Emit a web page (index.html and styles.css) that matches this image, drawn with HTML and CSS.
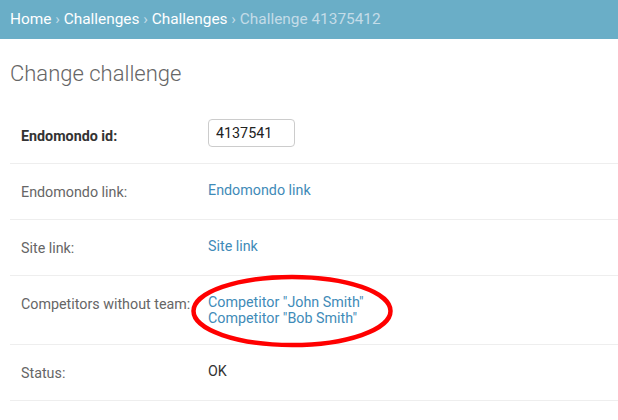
FILE: index.html
```html
<!DOCTYPE html>
<html>
<head>
<meta charset="utf-8">
<link rel="stylesheet" href="styles.css">
</head>
<body>
<div class="breadcrumbs">
  <a href="#">Home</a> <span class="sep">›</span> <a href="#">Challenges</a> <span class="sep">›</span> <a href="#">Challenges</a> <span class="sep">›</span> <span class="current">Challenge 41375412</span>
</div>
<div class="content">
  <h1 class="title">Change challenge</h1>
  <div class="fieldset">
    <div class="form-row">
      <label class="label required">Endomondo id:</label>
      <div class="field"><input class="text-input" type="text" value="4137541"></div>
    </div>
    <div class="form-row">
      <label class="label">Endomondo link:</label>
      <div class="readonly"><a href="#">Endomondo link</a></div>
    </div>
    <div class="form-row">
      <label class="label">Site link:</label>
      <div class="readonly"><a href="#">Site link</a></div>
    </div>
    <div class="form-row">
      <label class="label">Competitors without team:</label>
      <div class="readonly"><a href="#">Competitor "John Smith"</a><br><a href="#">Competitor "Bob Smith"</a></div>
    </div>
    <div class="form-row">
      <label class="label">Status:</label>
      <div class="readonly plain">OK</div>
    </div>
  </div>
</div>
<svg class="annotation" width="210" height="80" viewBox="0 0 210 80">
  <ellipse cx="104" cy="39" rx="98.5" ry="34" fill="none" stroke="#f00" stroke-width="4.5"/>
</svg>
</body>
</html>
```

FILE: styles.css
```css
html, body {
  margin: 0;
  padding: 0;
  background: #fff;
}
body {
  font-family: Roboto, "Liberation Sans", sans-serif;
  color: #333;
  position: relative;
  min-height: 420px;
}
.breadcrumbs {
  background: #6aaec7;
  padding: 11px 10px;
  font-size: 15.4px;
  line-height: 17px;
  color: #c4dce8;
  white-space: nowrap;
}
.breadcrumbs a {
  color: #fff;
  text-decoration: none;
}
.breadcrumbs .sep {
  color: #c4dce8;
}
.breadcrumbs .current {
  color: #c4dce8;
}
.content {
  padding: 22px 0 0 10px;
}
.title {
  margin: 0 0 21px 0;
  font-size: 22px;
  line-height: 26px;
  font-weight: 300;
  color: #666;
}
.form-row {
  display: flex;
  padding: 11px 0 11px 11px;
  min-height: 33px;
  border-bottom: 1px solid #eee;
  font-size: 14.3px;
}
.label {
  width: 187px;
  flex: none;
  padding-top: 10px;
  line-height: 14.3px;
  color: #666;
  white-space: nowrap;
}
.label.required {
  color: #333;
  font-weight: bold;
}
.field {
  display: flex;
  align-items: flex-start;
}
.text-input {
  box-sizing: border-box;
  width: 87px;
  height: 28px;
  border: 1px solid #ccc;
  border-radius: 4px;
  padding: 0 7px;
  font-family: Roboto, "Liberation Sans", sans-serif;
  font-size: 14.3px;
  color: #222;
  margin: 0;
}
.readonly {
  padding: 6.5px 0;
  line-height: 16.6px;
}
.readonly a {
  color: #3f8bb8;
  text-decoration: none;
}
.readonly.plain {
  color: #333;
}
.annotation {
  position: absolute;
  left: 188px;
  top: 272px;
}
```
